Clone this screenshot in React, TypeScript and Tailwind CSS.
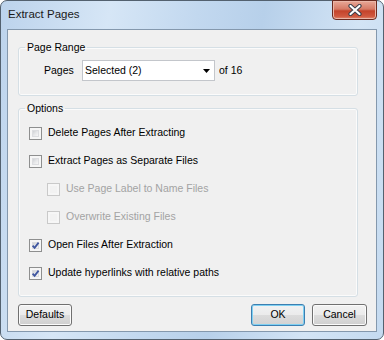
import React from "react";

const font = { fontFamily: '"Liberation Sans", Arial, sans-serif' };

function CheckBox({ checked = false, disabled = false }: { checked?: boolean; disabled?: boolean }) {
  return (
    <div
      className={
        "w-[13px] h-[13px] shrink-0 border p-[2px] bg-[#f6f6f6] " +
        (disabled ? "border-[#c9c9c9]" : "border-[#8e8f8f]")
      }
    >
      <div
        className={
          "w-full h-full relative " +
          (disabled
            ? "bg-[#f2f2f2]"
            : "bg-[linear-gradient(135deg,#cfd1d4_0%,#e6e7e9_50%,#f6f6f6_100%)] border border-[#dcdde0]")
        }
      >
        {checked && (
          <svg viewBox="0 0 7 7" className="absolute left-[-1px] top-[-1px] w-[7px] h-[7px] overflow-visible">
            <path d="M0.6 3.6 L2.6 5.9 L6.6 0.6" fill="none" stroke="#3f56a0" strokeWidth="1.8" />
          </svg>
        )}
      </div>
    </div>
  );
}

function Option({
  label,
  checked,
  disabled,
  indent,
}: {
  label: string;
  checked?: boolean;
  disabled?: boolean;
  indent?: boolean;
}) {
  return (
    <div className={"h-[28px] flex items-center gap-[6px] " + (indent ? "pl-[28px]" : "pl-[10px]")}>
      <CheckBox checked={checked} disabled={disabled} />
      <span className={disabled ? "text-[#a3a3a3]" : "text-black"}>{label}</span>
    </div>
  );
}

function Button({ label, primary = false, width }: { label: string; primary?: boolean; width: string }) {
  return (
    <button
      className={
        "h-[22px] rounded-[3px] border text-[10.5px] text-black flex items-center justify-center " +
        width +
        " " +
        (primary
          ? "border-[#3c7fb1] shadow-[inset_0_0_0_1px_#7fd0f2] bg-[linear-gradient(#f1f2f3_0%,#ebebeb_50%,#dcdcdc_50%,#d2d2d2_100%)]"
          : "border-[#707070] shadow-[inset_0_0_0_1px_#fbfbfb] bg-[linear-gradient(#f2f2f2_0%,#ebebeb_50%,#dddddd_50%,#cfcfcf_100%)]")
      }
      style={font}
    >
      {label}
    </button>
  );
}

export default function App() {
  return (
    <div className="w-[384px] h-[340px] bg-white">
      <div className="w-[384px] h-[340px] rounded-[7px] border border-[#53616f] bg-[linear-gradient(100deg,#bcd3ec_0%,#d6e6f6_25%,#c2d8ef_45%,#b7d0ea_60%,#d3e4f5_82%,#c4daf0_100%)] flex flex-col px-[6px] pb-[7px]">
        {/* Title bar */}
        <div className="h-[28px] flex items-start justify-between">
          <div className="h-[28px] flex items-center pl-[1px] text-[11.5px] text-[#1a1a1a]" style={font}>
            Extract Pages
          </div>
          <div className="-mt-[1px] w-[45px] h-[20px] rounded-b-[4px] border border-[#6b2a20] bg-[linear-gradient(#e9a898_0%,#d67a66_45%,#c4432b_55%,#d0583f_85%,#e28a70_100%)] shadow-[inset_0_0_0_1px_#eab6a8] flex items-center justify-center">
            <svg viewBox="0 0 14 12" className="w-[14px] h-[12px]">
              <path d="M2.5 2 L11.5 10 M11.5 2 L2.5 10" stroke="#3b3f4a" strokeWidth="4.2" strokeLinecap="round" />
              <path d="M2.5 2 L11.5 10 M11.5 2 L2.5 10" stroke="#ffffff" strokeWidth="2.2" strokeLinecap="round" />
            </svg>
          </div>
        </div>

        {/* Client area */}
        <div className="flex-1 border border-[#8498ad] bg-[#f0f0f0] flex flex-col text-[10.5px] text-black" style={font}>
          <fieldset className="mt-[11px] ml-[10px] w-[340px] border border-[#d5dfe5] rounded-[3px] pt-[6px] pb-[14px] shadow-[inset_0_0_0_1px_#fbfbfb]">
            <legend className="ml-[6px] px-[2px] leading-[13px]">Page Range</legend>
            <div className="flex items-center pl-[25px]">
              <span className="w-[38px]">Pages</span>
              <div className="w-[133px] h-[21px] border border-[#c3c6cb] bg-white flex items-center justify-between pl-[2px] pr-[4px]">
                <span>Selected (2)</span>
                <svg viewBox="0 0 7 4" className="w-[7px] h-[4px]">
                  <path d="M0 0 H7 L3.5 4 Z" fill="#000" />
                </svg>
              </div>
              <span className="ml-[4px]">of 16</span>
            </div>
          </fieldset>

          <fieldset className="mt-[6px] ml-[10px] w-[340px] border border-[#d5dfe5] rounded-[3px] pt-[4px] pb-[9px] shadow-[inset_0_0_0_1px_#fbfbfb]">
            <legend className="ml-[6px] px-[2px] leading-[13px]">Options</legend>
            <Option label="Delete Pages After Extracting" />
            <Option label="Extract Pages as Separate Files" />
            <Option label="Use Page Label to Name Files" disabled indent />
            <Option label="Overwrite Existing Files" disabled indent />
            <Option label="Open Files After Extraction" checked />
            <Option label="Update hyperlinks with relative paths" checked />
          </fieldset>

          <div className="mt-[7px] flex items-center pl-[10px] pr-[9px]">
            <Button label="Defaults" width="w-[54px]" />
            <div className="flex-1" />
            <div className="flex gap-[7px]">
              <Button label="OK" primary width="w-[54px]" />
              <Button label="Cancel" width="w-[55px]" />
            </div>
          </div>
        </div>
      </div>
    </div>
  );
}
